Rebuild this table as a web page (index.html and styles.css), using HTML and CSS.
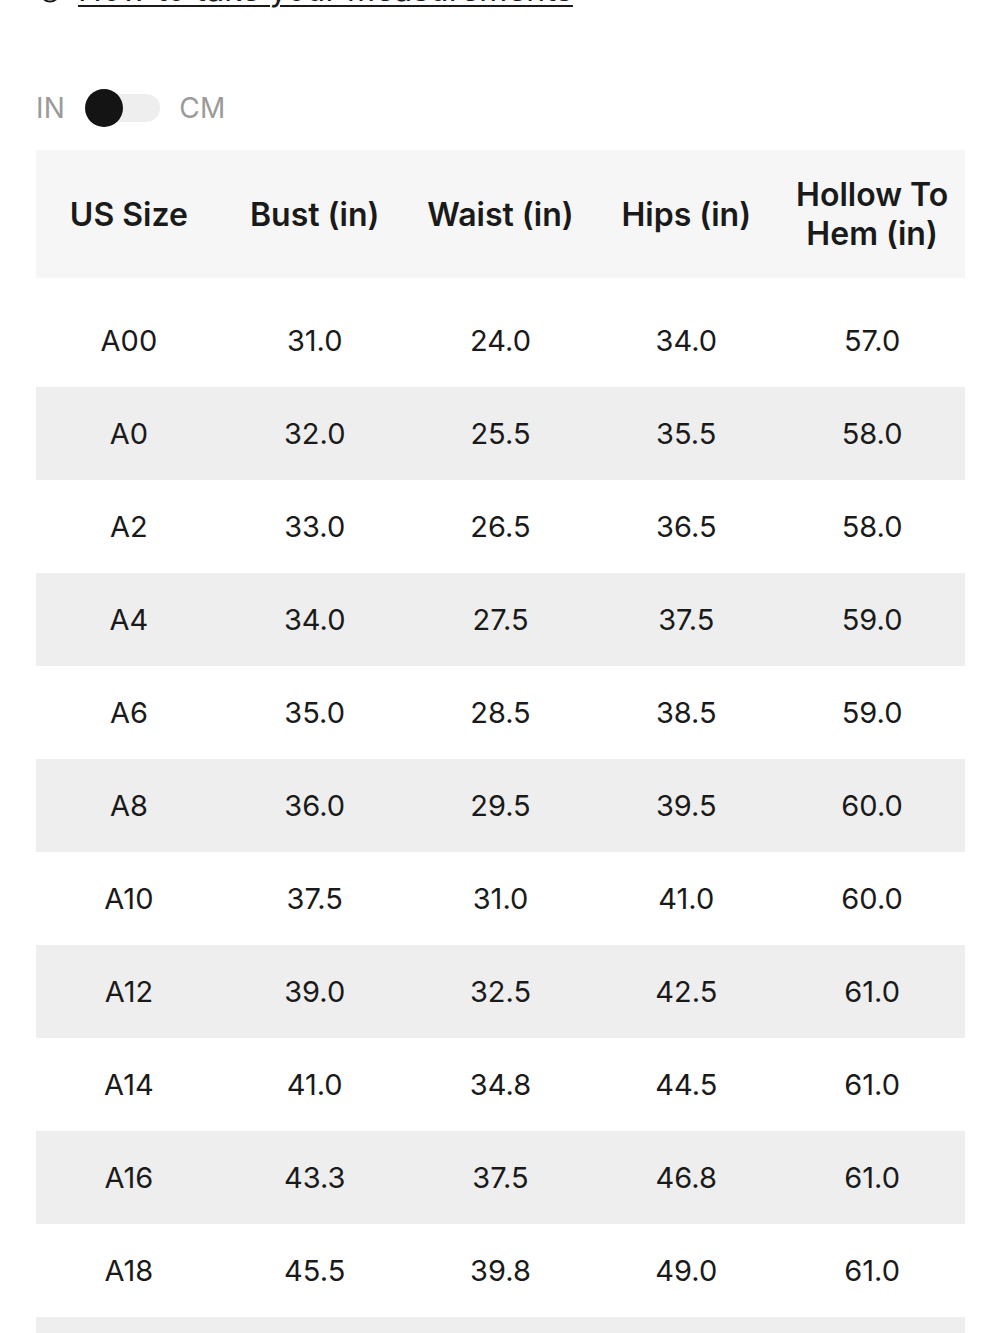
FILE: index.html
```html
<!DOCTYPE html>
<html>
<head>
<meta charset="utf-8">
<link rel="stylesheet" href="styles.css">
</head>
<body>
<div class="page">
  <div class="howto">
    <svg class="howto-icon" width="22" height="22" viewBox="0 0 22 22"><circle cx="11" cy="11" r="9.5" fill="none" stroke="#1a1a1a" stroke-width="2"/></svg>
    <a class="howto-link" href="#">How to take your measurements</a>
  </div>

  <div class="unit-toggle">
    <span class="unit">IN</span>
    <span class="switch"><span class="knob"></span></span>
    <span class="unit">CM</span>
  </div>

  <div class="chart">
    <div class="row head">
      <div class="cell">US Size</div>
      <div class="cell">Bust (in)</div>
      <div class="cell">Waist (in)</div>
      <div class="cell">Hips (in)</div>
      <div class="cell">Hollow To<br>Hem (in)</div>
    </div>
    <div class="body">
      <div class="row"><div class="cell">A00</div><div class="cell">31.0</div><div class="cell">24.0</div><div class="cell">34.0</div><div class="cell">57.0</div></div>
      <div class="row alt"><div class="cell">A0</div><div class="cell">32.0</div><div class="cell">25.5</div><div class="cell">35.5</div><div class="cell">58.0</div></div>
      <div class="row"><div class="cell">A2</div><div class="cell">33.0</div><div class="cell">26.5</div><div class="cell">36.5</div><div class="cell">58.0</div></div>
      <div class="row alt"><div class="cell">A4</div><div class="cell">34.0</div><div class="cell">27.5</div><div class="cell">37.5</div><div class="cell">59.0</div></div>
      <div class="row"><div class="cell">A6</div><div class="cell">35.0</div><div class="cell">28.5</div><div class="cell">38.5</div><div class="cell">59.0</div></div>
      <div class="row alt"><div class="cell">A8</div><div class="cell">36.0</div><div class="cell">29.5</div><div class="cell">39.5</div><div class="cell">60.0</div></div>
      <div class="row"><div class="cell">A10</div><div class="cell">37.5</div><div class="cell">31.0</div><div class="cell">41.0</div><div class="cell">60.0</div></div>
      <div class="row alt"><div class="cell">A12</div><div class="cell">39.0</div><div class="cell">32.5</div><div class="cell">42.5</div><div class="cell">61.0</div></div>
      <div class="row"><div class="cell">A14</div><div class="cell">41.0</div><div class="cell">34.8</div><div class="cell">44.5</div><div class="cell">61.0</div></div>
      <div class="row alt"><div class="cell">A16</div><div class="cell">43.3</div><div class="cell">37.5</div><div class="cell">46.8</div><div class="cell">61.0</div></div>
      <div class="row"><div class="cell">A18</div><div class="cell">45.5</div><div class="cell">39.8</div><div class="cell">49.0</div><div class="cell">61.0</div></div>
      <div class="row alt"><div class="cell">A20</div><div class="cell">47.8</div><div class="cell">42.0</div><div class="cell">51.3</div><div class="cell">61.0</div></div>
    </div>
  </div>
</div>
</body>
</html>
```

FILE: styles.css
```css
html, body {
  margin: 0;
  padding: 0;
  background: #ffffff;
}

body {
  font-family: Inter, "Noto Sans", "Liberation Sans", sans-serif;
  color: #1a1a1a;
  overflow: hidden;
  height: 1333px;
}

.page {
  padding: 0 36px;
}

.howto {
  display: flex;
  align-items: center;
  gap: 17px;
  height: 40px;
  margin-top: -30px;
  padding-left: 3px;
}

.howto-icon {
  flex: none;
  margin-top: 4px;
}

.howto-link {
  color: #1a1a1a;
  font-size: 32px;
  letter-spacing: 0.2px;
  text-decoration: underline;
  text-decoration-thickness: 2px;
  text-underline-offset: 4px;
  line-height: 40px;
}

.unit-toggle {
  display: flex;
  align-items: center;
  margin-top: 70px;
  height: 56px;
}

.unit {
  font-size: 28px;
  color: #9a9a9a;
  letter-spacing: 0.3px;
}

.switch {
  position: relative;
  display: inline-block;
  width: 75px;
  height: 28px;
  margin: 0 19px 0 20px;
}

.switch::before {
  content: "";
  position: absolute;
  left: 8px;
  right: 0;
  top: 0;
  bottom: 0;
  border-radius: 14px;
  background: #eeeeee;
}

.knob {
  position: absolute;
  left: 0;
  top: -5px;
  width: 38px;
  height: 38px;
  border-radius: 50%;
  background: #141414;
}

.chart {
  margin-top: 14px;
  width: 929px;
}

.row {
  display: grid;
  grid-template-columns: repeat(5, 1fr);
  align-items: center;
  height: 93px;
}

.row.head {
  height: 128px;
  background: #f6f6f6;
  font-weight: 600;
  line-height: 39px;
}

.body {
  padding-top: 16px;
}

.row.alt {
  background: #eeeeee;
}

.cell {
  text-align: center;
  font-size: 29px;
}

.row.head .cell {
  font-size: 32px;
}
```
